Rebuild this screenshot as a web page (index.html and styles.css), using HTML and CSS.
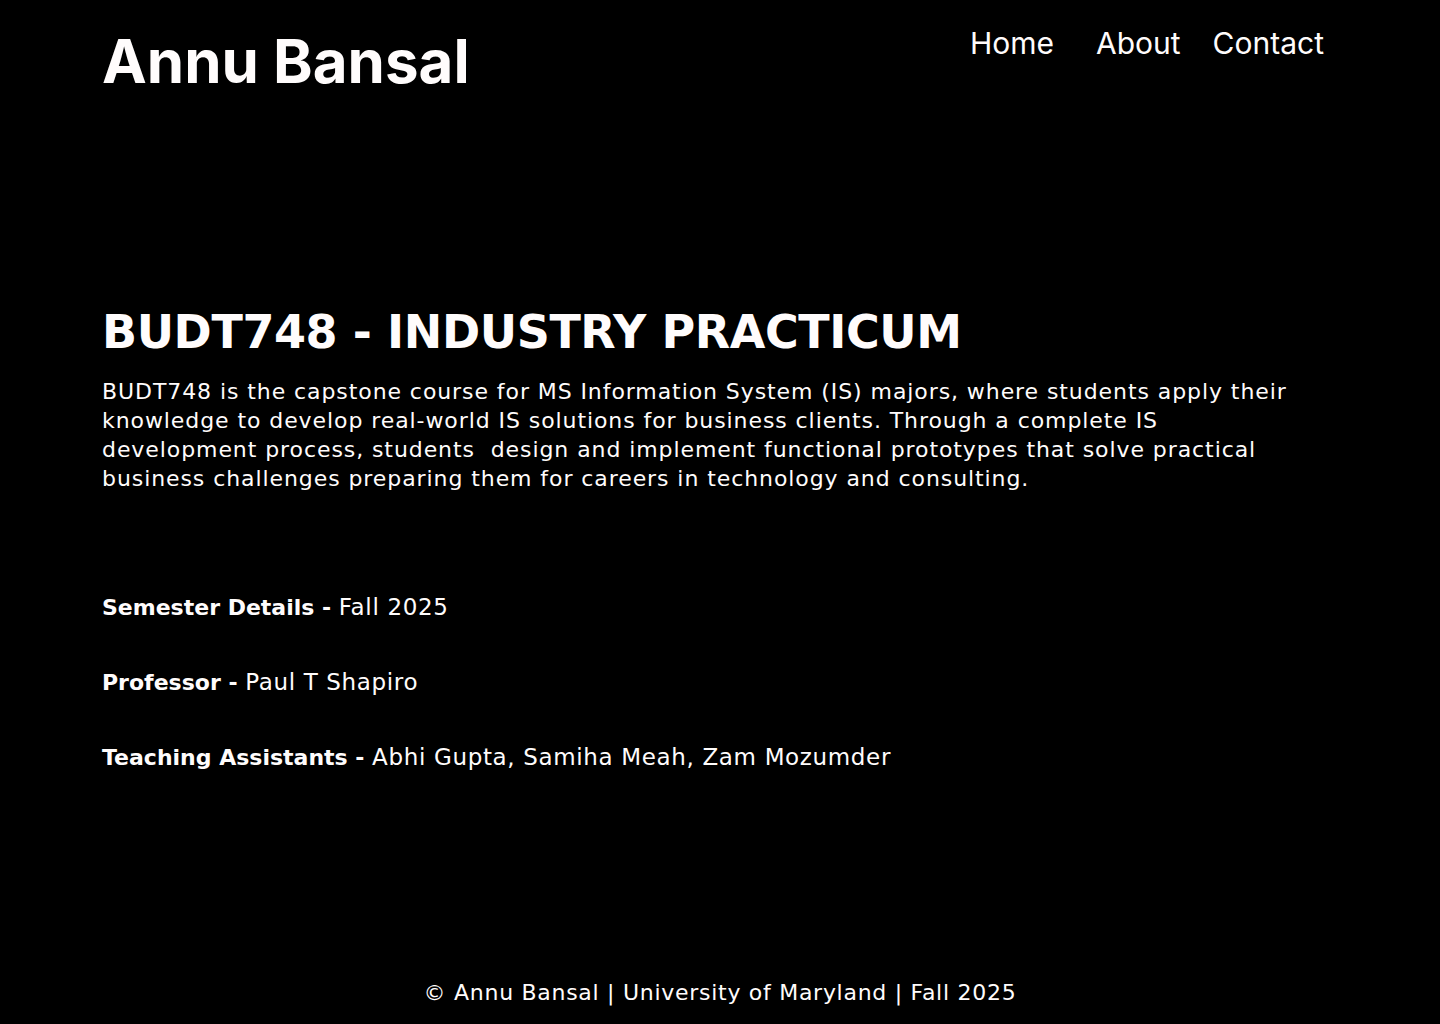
FILE: index.html
```html
<!DOCTYPE html>
<html lang="en">
<head>
<meta charset="utf-8">
<title>Annu Bansal - BUDT748</title>
<link rel="stylesheet" href="styles.css">
</head>
<body>
<div class="page">
  <header class="header">
    <div class="logo">Annu Bansal</div>
    <nav class="nav">
      <a class="nav-link nav-home" href="#">Home</a>
      <a class="nav-link" href="#">About</a>
      <a class="nav-link" href="#">Contact</a>
    </nav>
  </header>
  <main class="main">
    <h1 class="course-title">BUDT748 - INDUSTRY PRACTICUM</h1>
    <p class="course-desc">BUDT748 is the capstone course for MS Information System (IS) majors, where students apply their knowledge to develop real-world IS solutions for business clients. Through a complete IS development process, students&nbsp; design and implement functional prototypes that solve practical business challenges preparing them for careers in technology and consulting.</p>
    <div class="details">
      <p class="detail"><strong>Semester Details - </strong>Fall 2025</p>
      <p class="detail"><strong>Professor - </strong>Paul T Shapiro</p>
      <p class="detail"><strong>Teaching Assistants - </strong>Abhi Gupta, Samiha Meah, Zam Mozumder</p>
    </div>
  </main>
  <footer class="footer">© Annu Bansal | University of Maryland | Fall 2025</footer>
</div>
</body>
</html>
```
FILE: styles.css
```css
html, body {
  margin: 0;
  padding: 0;
  background: #000;
}
body {
  color: #fffcfc;
  font-family: "DejaVu Sans", sans-serif;
}
.page {
  width: 1440px;
  height: 1024px;
  display: flex;
  flex-direction: column;
}
.header {
  display: flex;
  justify-content: space-between;
  align-items: flex-start;
  padding: 26px 116px 0 102px;
}
.logo {
  font-family: Inter, sans-serif;
  font-weight: 700;
  font-size: 60px;
  line-height: 70px;
}
.nav {
  display: flex;
  gap: 32px;
}
.nav-link {
  font-family: Inter, sans-serif;
  font-size: 30px;
  line-height: 34px;
  color: #fffcfc;
  text-decoration: none;
}
.nav-home {
  margin-right: 10px;
}
.main {
  padding: 208px 140px 0 102px;
  flex: 1;
}
.course-title {
  margin: 0;
  font-size: 46px;
  line-height: 56px;
  font-weight: 700;
  letter-spacing: -0.4px;
}
.course-desc {
  margin: 17px 0 0;
  font-size: 22px;
  line-height: 29px;
  font-weight: 400;
  letter-spacing: 0.92px;
}
.details {
  margin-top: 100px;
  display: flex;
  flex-direction: column;
  gap: 46px;
}
.detail {
  margin: 0;
  font-size: 23px;
  line-height: 29px;
  letter-spacing: 0.65px;
}
.detail strong {
  font-size: 22px;
  font-weight: 700;
  letter-spacing: 0;
}
.footer {
  text-align: center;
  font-size: 22px;
  line-height: 29px;
  letter-spacing: 0.72px;
  padding-bottom: 17px;
}
```
